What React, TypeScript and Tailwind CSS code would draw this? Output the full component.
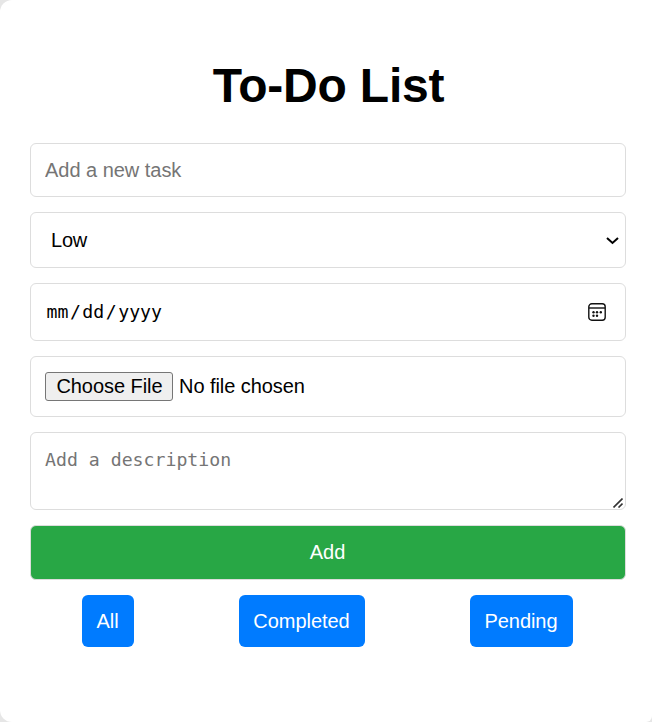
const field = "w-full rounded-[6px] border border-[#dddddd] bg-white";

function Filter({ label, width }: { label: string; width: string }) {
  return (
    <button className={`${width} h-[52px] rounded-[6px] bg-[#007bff] text-center tracking-[-0.05px] text-white`}>
      {label}
    </button>
  );
}

export default function App() {
  return (
    <div className="h-[722px] w-[652px] overflow-hidden bg-[#e6e6e6] font-['Liberation_Sans',Arial,sans-serif] text-[20px] leading-[23px] text-black">
      <main className="flex h-full w-full flex-col rounded-l-[12px] rounded-br-[6px] bg-white pr-[26px] pl-[30px] pt-[58px]">
        <h1 className="h-[85px] pl-px text-center text-[48px] leading-[56px] font-bold tracking-[-0.2px]">To-Do List</h1>
        <form className="flex flex-col gap-[15px]" onSubmit={(e) => e.preventDefault()}>
          <input
            className={`${field} h-[54px] px-[14px] tracking-[-0.03px] placeholder:text-[#757575] placeholder:opacity-100`}
            placeholder="Add a new task"
          />
          <div className={`${field} flex h-[56px] items-center justify-between pr-[6px] pl-[20px]`}>
            <span className="tracking-[-0.2px]">Low</span>
            <svg width="14" height="10" viewBox="0 0 14 10" fill="none" stroke="#000" strokeWidth="2">
              <path d="M2 3L7.5 8L13 3" />
            </svg>
          </div>
          <div className={`${field} flex h-[58px] items-center justify-between pr-[19px] pl-[14px]`}>
            <span className="flex pb-[2px] font-['DejaVu_Sans_Mono',monospace] text-[18.2px]">
              <span className="px-[1.5px]">mm</span>
              <span>/</span>
              <span className="px-[1.5px]">dd</span>
              <span>/</span>
              <span className="px-[1.5px]">yyyy</span>
            </span>
            <svg width="18" height="18" viewBox="0 0 18 18" fill="none" stroke="#111" strokeWidth="1.4">
              <rect x="0.8" y="0.8" width="16.4" height="16.4" rx="3" />
              <path d="M1 5H17" />
              <g fill="#111" stroke="none">
                <circle cx="5.5" cy="9.3" r="1.2" />
                <circle cx="9" cy="9.3" r="1.2" />
                <circle cx="12.8" cy="9.3" r="1.2" />
                <circle cx="5.5" cy="12.8" r="1.2" />
                <circle cx="9" cy="12.8" r="1.2" />
              </g>
            </svg>
          </div>
          <div className={`${field} flex h-[61px] items-center gap-[6px] px-[14px]`}>
            <button type="button" className="h-[29px] w-[128px] rounded-[3px] border border-[#767676] bg-[#efefef] pl-px leading-[27px] tracking-[-0.05px]">
              Choose File
            </button>
            <span className="tracking-[-0.06px]">No file chosen</span>
          </div>
          <div className="relative h-[78px]">
            <textarea
              className={`${field} block h-[78px] resize-none px-[14px] pt-[15px] font-['DejaVu_Sans_Mono',monospace] text-[18.2px] placeholder:text-[#757575] placeholder:opacity-100`}
              placeholder="Add a description"
            />
            <svg className="absolute right-[3px] bottom-[2px]" width="10" height="10" viewBox="0 0 10 10" stroke="#333" strokeWidth="1.6">
              <path d="M0.5 9.5L9.5 0.5M5.5 9.5L9.5 5.5" />
            </svg>
          </div>
          <button className="h-[55px] w-full rounded-[6px] border border-[#dddddd] bg-[#28a745] pr-px text-center text-white">
            Add
          </button>
        </form>
        <div className="mt-[15px] mr-px -ml-px flex justify-around">
          <Filter label="All" width="w-[52px]" />
          <Filter label="Completed" width="w-[126px]" />
          <Filter label="Pending" width="w-[103px]" />
        </div>
      </main>
    </div>
  );
}
